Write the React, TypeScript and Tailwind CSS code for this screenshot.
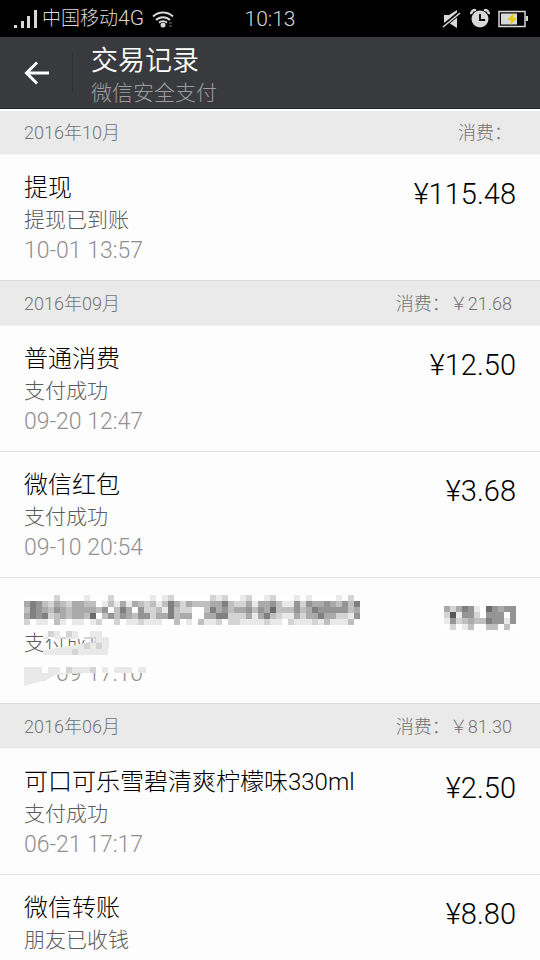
type Payment = {
    title: string;
    status: string;
    date?: string;
    amount?: string;
    masked?: boolean;
};

type Month = {
    label: string;
    total: string;
    items: Payment[];
};

const months: Month[] = [
    {
        label: '2016年10月',
        total: '消费：',
        items: [{ title: '提现', status: '提现已到账', date: '10-01 13:57', amount: '¥115.48' }],
    },
    {
        label: '2016年09月',
        total: '消费：￥21.68',
        items: [
            { title: '普通消费', status: '支付成功', date: '09-20 12:47', amount: '¥12.50' },
            { title: '微信红包', status: '支付成功', date: '09-10 20:54', amount: '¥3.68' },
            { title: '', status: '支付成功', date: '09-09 17:10', masked: true },
        ],
    },
    {
        label: '2016年06月',
        total: '消费：￥81.30',
        items: [
            { title: '可口可乐雪碧清爽柠檬味330ml', status: '支付成功', date: '06-21 17:17', amount: '¥2.50' },
            { title: '微信转账', status: '朋友已收钱', amount: '¥8.80' },
        ],
    },
];

// One digit per 6px block, 0 is white and 9 is nearly black
const titleMosaic = [
    '00000200001000200000010120000002120012001200010100001020',
    '46532432443301314143231364243334463224144531152544543536',
    '36543543444435036405223163220036453445354733353465555534',
    '46562343443703535435524463440044662224146321142446442215',
    '20110310110120020112111003010311202211112110211121311130',
];

const amountMosaic = [
    '424651075455',
    '281552055505',
    '152343365515',
    '020130033030',
];

const shade = (level: string) => {
    const v = 254 - Number(level) * 21;
    return `rgb(${v},${v},${v})`;
};

function Blocks({ rows, x = 0, y = 0 }: { rows: string[]; x?: number; y?: number }) {
    return (
        <g shapeRendering="crispEdges">
            {rows.map((row, r) =>
                row.split('').map((level, c) => (
                    <rect key={`${r}-${c}`} x={x + c * 6} y={y + r * 6} width="6" height="6" fill={shade(level)} />
                ))
            )}
        </g>
    );
}

function StatusBar() {
    return (
        <div className="grid h-[37px] shrink-0 grid-cols-[1fr_auto_1fr] items-center bg-black px-3 text-[19px] leading-6 font-light text-[#d8d8d8]">
            <div className="flex items-center gap-1">
                <svg width="26" height="18" viewBox="0 0 26 18" fill="#d8d8d8">
                    <rect x="2" y="15" width="3" height="3" />
                    <rect x="9" y="11" width="3" height="7" />
                    <rect x="15" y="6" width="3" height="12" />
                    <rect x="22" y="0" width="3" height="18" />
                </svg>
                <span className="pr-1">
                    中国移动<span className="text-[21px]">4G</span>
                </span>
                <svg width="22" height="18" viewBox="0 0 22 18" fill="none" stroke="#d8d8d8" strokeWidth="2">
                    <path d="M1 6.500a14.500 14.500 0 0 1 20 0" />
                    <path d="M4 10a10 10 0 0 1 14 0" />
                    <path d="M7 12.800a6 6 0 0 1 8 0" />
                    <circle cx="11" cy="15" r="2.500" fill="#d8d8d8" stroke="none" />
                    <path d="M17 13h3M17 16h3" stroke="#777" strokeWidth="1" />
                </svg>
            </div>
            <span className="text-[21px]">10:13</span>
            <div className="flex items-center justify-end gap-2">
                <svg width="20" height="18" viewBox="0 0 20 18">
                    <path d="M2 5h5l8-5v18l-8-5H2z" fill="#d8d8d8" />
                    <path d="M1 16.500 18 2.500" stroke="#000" strokeWidth="4" />
                    <path d="M1 17 18 3" stroke="#d8d8d8" strokeWidth="1.600" />
                </svg>
                <svg width="20" height="19" viewBox="0 0 20 19">
                    <circle cx="10" cy="10" r="8.500" fill="#d8d8d8" />
                    <path d="M1.200 5.200A4 4 0 0 1 6 1M18.800 5.200A4 4 0 0 0 14 1" fill="none" stroke="#d8d8d8" strokeWidth="2.500" />
                    <path d="M10 5v6h5" fill="none" stroke="#000" strokeWidth="1.800" />
                </svg>
                <svg width="30" height="18" viewBox="0 0 30 18">
                    <rect x="1" y="1.500" width="26" height="15" fill="none" stroke="#d8d8d8" strokeWidth="1.500" />
                    <rect x="3" y="3.500" width="16" height="11" fill="#d8d8d8" />
                    <path d="M16 3 9 10h4l-1 5 7-7h-4z" fill="#e6c800" />
                    <rect x="28" y="6" width="2" height="5" fill="#d8d8d8" />
                </svg>
            </div>
        </div>
    );
}

function Header() {
    return (
        <header className="flex h-[72px] shrink-0 items-center border-b border-[#222326] bg-[#393a3e]">
            <button type="button" aria-label="返回" className="flex h-10 w-[73px] items-center border-r border-[#303134] pl-6">
                <svg width="25" height="24" viewBox="0 0 25 24" fill="none" stroke="#fff" strokeWidth="3">
                    <path d="M25 12H3M13 1.500 2.500 12 13 22.500" />
                </svg>
            </button>
            <div className="pt-2 pl-[18px]">
                <h1 className="text-[27px] leading-8 font-[350] text-white">交易记录</h1>
                <p className="text-[21px] leading-8 font-light text-[#9c9d9f]">微信安全支付</p>
            </div>
        </header>
    );
}

function SmudgedText() {
    return (
        <svg className="absolute top-0 left-0" width="126" height="64" viewBox="0 0 126 64" aria-hidden="true">
            <clipPath id="status-smudge">
                <path d="M19 3h66v26H19v-6l32-5 20-4V12H19z" />
            </clipPath>
            <clipPath id="date-smudge">
                <path d="M0 36h122v10H62l-30 2-10 5-22 6z" />
            </clipPath>
            <g clipPath="url(#status-smudge)">
                <Blocks y={-2} rows={['000000000000000', '000021021001100', '000101211022111', '000011111121211', '000111112111110']} />
            </g>
            <g clipPath="url(#date-smudge)">
                <Blocks y={34} rows={['000000000000000000000', '111011021112010111011', '111111112101000000000', '111110000000000000000', '100000000000000000000']} />
            </g>
        </svg>
    );
}

function PaymentRow({ item }: { item: Payment }) {
    return (
        <li className="flex justify-between border-t border-[#e2e2e2] bg-[#fdfdfd] px-6 pt-[17px] pb-[14px] first:border-[#f4f4f4]">
            <div>
                {item.masked ? (
                    <div className="h-8">
                        <svg width="336" height="30" viewBox="0 0 336 30" role="img" aria-label="已隐藏">
                            <Blocks rows={titleMosaic} />
                        </svg>
                    </div>
                ) : (
                    <h2 className="text-[24px] leading-8 font-light text-black">{item.title}</h2>
                )}
                <div className="relative">
                    <p className="text-[21px] leading-8 font-light text-[#5c5c5c]">{item.status}</p>
                    {item.date && <p className="text-[23px] leading-[30px] font-light text-[#909090]">{item.date}</p>}
                    {item.masked && <SmudgedText />}
                </div>
            </div>
            {item.masked ? (
                <svg className="mt-[11px]" width="72" height="24" viewBox="0 0 72 24" role="img" aria-label="已隐藏">
                    <Blocks rows={amountMosaic} />
                </svg>
            ) : (
                <span className="pt-1 text-[29px] leading-9 font-[350] text-black">{item.amount}</span>
            )}
        </li>
    );
}

export default function App() {
    return (
        <div className="flex h-screen flex-col overflow-hidden bg-[#fdfdfd] font-['Roboto','Noto_Sans_CJK_SC',sans-serif]">
            <StatusBar />
            <Header />
            <main className="min-h-0 flex-1 overflow-hidden">
                {months.map((month) => (
                    <section key={month.label} className="group">
                        <div className="flex h-[45px] items-center justify-between border-t border-[#dcdcdc] bg-[#eaeaea] px-6 text-[18px] font-light text-[#747474] group-first:border-t-2 group-first:border-white">
                            <span>{month.label}</span>
                            <span className="pr-1">{month.total}</span>
                        </div>
                        <ul>
                            {month.items.map((item, i) => (
                                <PaymentRow key={i} item={item} />
                            ))}
                        </ul>
                    </section>
                ))}
            </main>
        </div>
    );
}
